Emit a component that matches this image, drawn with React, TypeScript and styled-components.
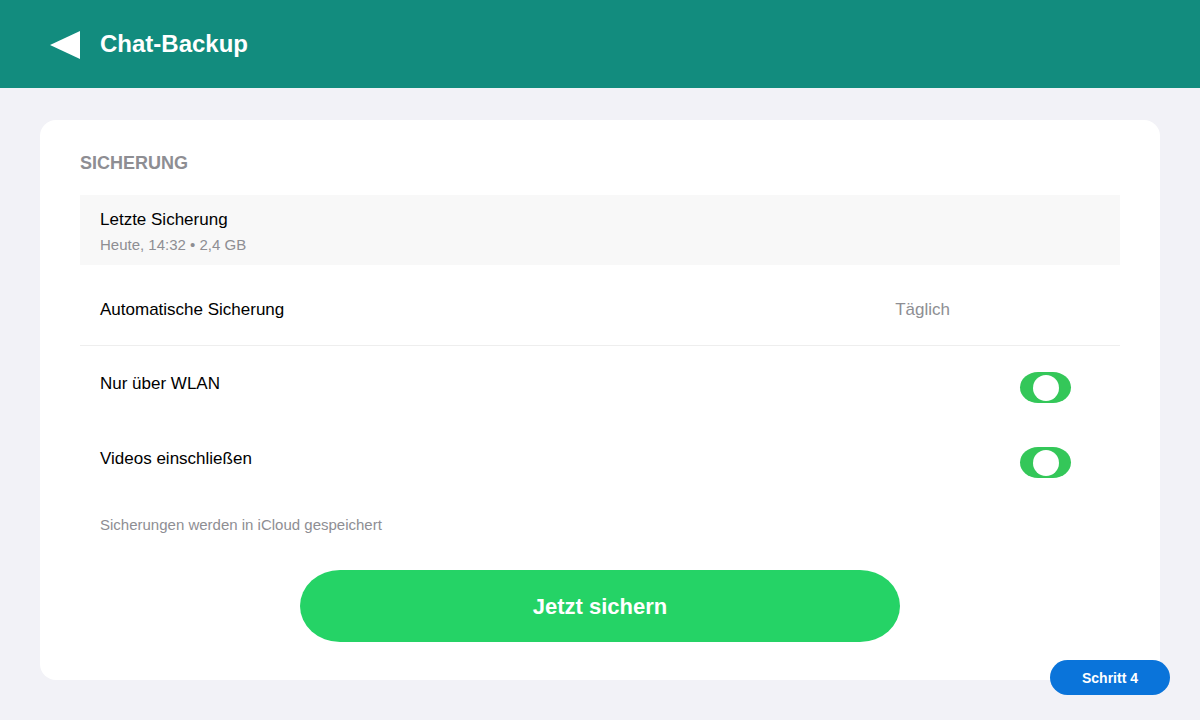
import styled, { createGlobalStyle } from "styled-components";

const GlobalStyle = createGlobalStyle`
  html, body {
    margin: 0;
    padding: 0;
    background: #f2f2f7;
    font-family: "Liberation Sans", Arial, sans-serif;
  }
`;

type Setting = {
  label: string;
  on: boolean;
};

const switches: Setting[] = [
  { label: "Nur über WLAN", on: true },
  { label: "Videos einschließen", on: true },
];

const BackArrow = () => (
  <svg width="30" height="28" viewBox="0 0 30 28">
    <polygon points="0,14 30,0 30,28" fill="#ffffff" />
  </svg>
);

const App = () => {
  return (
    <Page>
      <GlobalStyle />
      <Header>
        <BackButton aria-label="Zurück">
          <BackArrow />
        </BackButton>
        <Title>Chat-Backup</Title>
      </Header>

      <Main>
        <Card>
          <SectionLabel>SICHERUNG</SectionLabel>

          <LastBackup>
            <RowTitle>Letzte Sicherung</RowTitle>
            <RowSub>Heute, 14:32 • 2,4 GB</RowSub>
          </LastBackup>

          <ValueRow>
            <RowTitle>Automatische Sicherung</RowTitle>
            <RowValue>Täglich</RowValue>
          </ValueRow>

          {switches.map((s) => (
            <SwitchRow key={s.label}>
              <SwitchLabel>{s.label}</SwitchLabel>
              <Toggle $on={s.on}>
                <Knob />
              </Toggle>
            </SwitchRow>
          ))}

          <Footnote>Sicherungen werden in iCloud gespeichert</Footnote>

          <BackupButton>Jetzt sichern</BackupButton>
        </Card>
      </Main>

      <StepBadge>Schritt 4</StepBadge>
    </Page>
  );
};

export default App;

const Page = styled.div`
  min-height: 720px;
  background: #f2f2f7;
`;

const Header = styled.header`
  height: 88px;
  background: #128c7e;
  display: flex;
  align-items: center;
  padding-left: 50px;
  gap: 20px;
  box-sizing: border-box;
`;

const BackButton = styled.div`
  display: flex;
  align-items: center;
  margin-top: 1px;
`;

const Title = styled.h1`
  margin: 0;
  color: #ffffff;
  font-size: 24px;
  font-weight: 700;
`;

const Main = styled.main`
  padding: 32px 40px 40px;
`;

const Card = styled.section`
  background: #ffffff;
  border-radius: 16px;
  padding: 32px 40px 38px;
  display: flex;
  flex-direction: column;
`;

const SectionLabel = styled.div`
  font-size: 18px;
  line-height: 22px;
  font-weight: 700;
  color: #8e8e93;
  margin-bottom: 21px;
`;

const LastBackup = styled.div`
  background: #f8f8f8;
  padding: 14px 20px 12px;
  display: flex;
  flex-direction: column;
  gap: 6px;
`;

const RowTitle = styled.div`
  font-size: 17px;
  line-height: 21px;
  color: #000000;
`;

const RowSub = styled.div`
  font-size: 15px;
  line-height: 17px;
  color: #8e8e93;
`;

const ValueRow = styled.div`
  display: flex;
  justify-content: space-between;
  align-items: center;
  padding: 34px 170px 25px 20px;
  border-bottom: 1px solid #eeeeee;
`;

const RowValue = styled.div`
  font-size: 17px;
  line-height: 21px;
  color: #8e8e93;
`;

const SwitchRow = styled.div`
  display: flex;
  justify-content: space-between;
  align-items: flex-start;
  height: 75px;
  padding: 26px 49px 0 20px;
  box-sizing: border-box;
`;

const SwitchLabel = styled.div`
  font-size: 17px;
  line-height: 24px;
  color: #000000;
`;

const Toggle = styled.div<{ $on: boolean }>`
  width: 51px;
  height: 31px;
  border-radius: 18px / 15.5px;
  background: ${(p) => (p.$on ? "#34c759" : "#e5e5ea")};
  display: flex;
  align-items: center;
  justify-content: center;
`;

const Knob = styled.div`
  width: 26px;
  height: 26px;
  border-radius: 50%;
  background: #ffffff;
`;

const Footnote = styled.div`
  margin-top: 20px;
  padding-left: 20px;
  font-size: 15px;
  line-height: 18px;
  color: #8e8e93;
`;

const BackupButton = styled.button`
  align-self: center;
  margin-top: 36px;
  width: 600px;
  height: 72px;
  border: none;
  border-radius: 40px / 36px;
  background: #25d366;
  color: #ffffff;
  font-family: "Liberation Sans", Arial, sans-serif;
  font-size: 22px;
  font-weight: 700;
  padding-top: 2px;
  cursor: pointer;
`;

const StepBadge = styled.div`
  position: fixed;
  right: 30px;
  bottom: 25px;
  width: 120px;
  height: 35px;
  border-radius: 18px;
  background: #0a74da;
  color: #ffffff;
  font-size: 14px;
  font-weight: 700;
  display: flex;
  align-items: center;
  justify-content: center;
`;
